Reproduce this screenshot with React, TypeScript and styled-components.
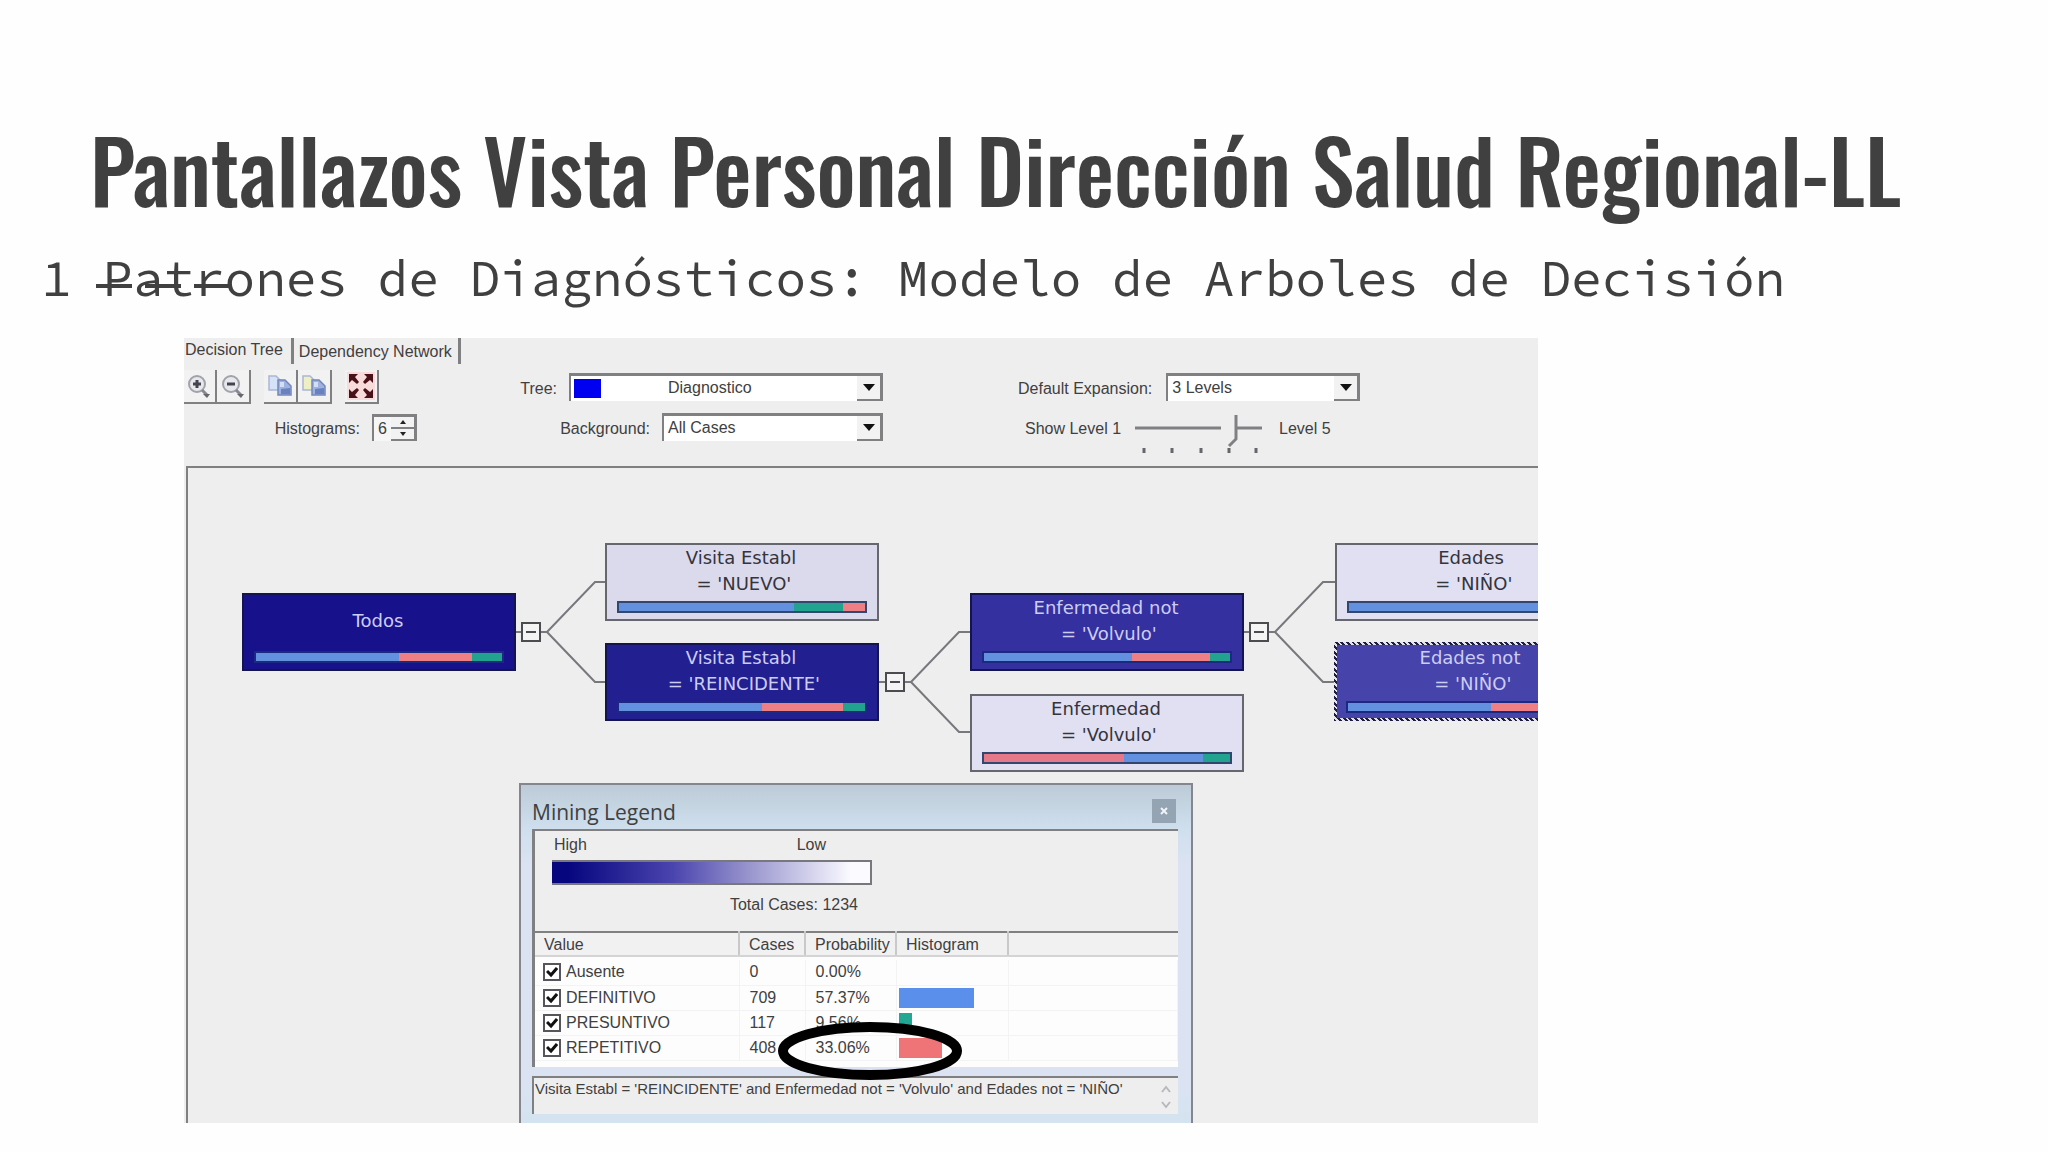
import React from "react";
import styled, { createGlobalStyle, css } from "styled-components";

const INK = "#404040";
const GREY = "#808083";
const FACE = "#efeeef";
const BLUE = "#6490e0";
const GREEN = "#22a390";
const RED = "#ee8085";

const GlobalStyle = createGlobalStyle`
  *, *::before, *::after { box-sizing: border-box; }
  body {
    margin: 0;
    background: #fefefe;
    color: ${INK};
    font-family: "Liberation Sans", Arial, sans-serif;
  }
  button, input, select, textarea { font: inherit; color: inherit; margin: 0; }
`;

const Slide = styled.main`
  display: flex;
  flex-direction: column;
  padding: 108px 0 28px;
`;

const Title = styled.h1`
  margin: 0;
  padding-left: 90px;
  font-family: Oswald, "Roboto Condensed", Roboto, sans-serif;
  font-size: 86px;
  font-weight: 500;
  line-height: 120px;
  white-space: nowrap;
`;

const Subtitle = styled.h2`
  position: relative;
  margin: 0;
  padding: 16px 0 26px 41px;
  font-family: "Source Code Pro", "Liberation Mono", monospace;
  font-size: 51px;
  font-weight: 400;
  line-height: 68px;
  white-space: nowrap;
`;

const Dashes = styled.span`
  position: absolute;
  left: 96px;
  top: 56px;
  display: flex;
  gap: 13px;
`;

const Dash = styled.span`
  width: 36px;
  height: 4px;
  background: ${INK};
`;

const Viewer = styled.section`
  margin: 0 510px 0 184px;
  overflow: hidden;
  background: ${FACE};
  font-size: 16px;
  line-height: 20px;
`;

const Tabs = styled.div`
  display: flex;
  height: 28px;
`;

const Tab = styled.button<{ $active?: boolean }>`
  height: 26px;
  padding: ${(p) => (p.$active ? "0 8px 2px 1px" : "2px 6px 0 5px")};
  border: 0;
  border-right: 3px solid ${GREY};
  background: none;
  text-align: left;
  white-space: nowrap;
`;

const Controls = styled.div`
  display: grid;
  grid-template-columns: 336px 363px 1fr;
  grid-template-rows: 40px 40px;
  padding: 4px 0 16px;
`;

const Tools = styled.div`
  display: flex;
  gap: 13px;
  margin-left: -1px;
`;

const ToolGroup = styled.div`
  display: flex;
`;

const ToolButton = styled.button`
  display: flex;
  align-items: center;
  justify-content: center;
  width: 34px;
  height: 34px;
  padding: 0;
  border: 0;
  border-right: 2px solid ${GREY};
  border-bottom: 2px solid ${GREY};
  background: #f3f2f2;
`;

const Field = styled.div<{ $indent?: number; $end?: number; $right?: boolean; $gap?: number }>`
  display: flex;
  align-items: center;
  justify-content: ${(p) => (p.$right ? "flex-end" : "flex-start")};
  gap: ${(p) => p.$gap ?? 12}px;
  height: 34px;
  padding-left: ${(p) => p.$indent ?? 0}px;
  padding-right: ${(p) => p.$end ?? 0}px;
  white-space: nowrap;
  > label, > span { padding-top: 4px; }
`;

const sunken = css`
  border-style: solid;
  border-color: ${GREY};
  border-width: 3px 3px 0 2px;
`;

const SelectBox = styled.div<{ $width: number }>`
  position: relative;
  width: ${(p) => p.$width}px;
  height: 28px;
  ${sunken}
  background: #fff;
`;

const Select = styled.select<{ $inset?: number }>`
  width: 100%;
  height: 24px;
  padding: 0 26px 0 ${(p) => p.$inset ?? 4}px;
  border: 0;
  appearance: none;
  background: transparent;
`;

const Swatch = styled.span`
  position: absolute;
  left: 3px;
  top: 3px;
  width: 27px;
  height: 19px;
  background: #0000f0;
`;

const Drop = styled.span`
  position: absolute;
  right: 0;
  top: 0;
  display: flex;
  align-items: center;
  justify-content: center;
  width: 23px;
  height: 25px;
  border-bottom: 2px solid ${GREY};
  background: #f3f2f2;
  pointer-events: none;
`;

const Spinner = styled.div`
  display: flex;
  width: 45px;
  height: 27px;
  ${sunken}
  background: #f6f6f6;
`;

const SpinInput = styled.input`
  width: 17px;
  padding: 0 0 0 4px;
  border: 0;
  background: transparent;
`;

const SpinButtons = styled.div`
  display: flex;
  flex-direction: column;
  flex: 1;
`;

const SpinButton = styled.button`
  display: flex;
  align-items: center;
  justify-content: center;
  height: 12px;
  padding: 0;
  border: 0;
  border-bottom: 2px solid ${GREY};
  background: #f3f2f2;
`;

const SliderBox = styled.div`
  position: relative;
  width: 130px;
  height: 40px;
  margin-top: 14px;
`;

const SliderInput = styled.input`
  position: absolute;
  inset: 0;
  width: 100%;
  height: 100%;
  opacity: 0;
`;

const Canvas = styled.div`
  position: relative;
  min-height: 657px;
  margin-left: 2px;
  border-top: 2px solid ${GREY};
  border-left: 2px solid ${GREY};
  overflow: hidden;
`;

const Links = styled.svg`
  position: absolute;
  left: 0;
  top: 0;
`;

const Node = styled.div<{ $x: number; $y: number; $fill: string; $dark?: boolean; $selected?: boolean }>`
  position: absolute;
  left: ${(p) => p.$x}px;
  top: ${(p) => p.$y}px;
  display: flex;
  flex-direction: column;
  width: 274px;
  height: 78px;
  padding: 0 10px 6px;
  border: 2px solid ${(p) => (p.$dark ? "#14144e" : "#66666e")};
  background: ${(p) => p.$fill};
  color: ${(p) => (p.$dark ? "#cdcdf2" : "#34343c")};
  font-family: "DejaVu Sans", Verdana, sans-serif;
  font-size: 18px;
  line-height: 26px;
  text-align: center;
  white-space: pre;
  ${(p) =>
    p.$selected &&
    css`
      height: 79px;
      border-color: transparent;
      background:
        linear-gradient(${p.$fill}, ${p.$fill}) padding-box,
        repeating-linear-gradient(45deg, #1c1c44 0 2px, #e4e4ea 2px 4px) border-box;
      border-width: 3px;
      padding: 0 9px 5px;
    `}
`;

const NodeText = styled.div`
  display: flex;
  flex: 1;
  align-items: center;
  justify-content: center;
  padding: 0 2px 4px 0;
`;

const Bar = styled.div<{ $dark?: boolean }>`
  display: flex;
  height: 12px;
  border: 2px solid ${(p) => (p.$dark ? "#1b2a80" : "#33466e")};
`;

const Segment = styled.span<{ $color: string }>`
  background: ${(p) => p.$color};
`;

const Legend = styled.section`
  position: absolute;
  left: 331px;
  top: 315px;
  width: 674px;
  height: 360px;
  padding: 0 13px 0 11px;
  border: 2px solid #85858f;
  background: linear-gradient(#bccbd6 0, #cfdfee 44px, #dbe3f2 80px, #dbe3f2 300px, #d3e3ef 340px);
`;

const LegendBar = styled.header`
  display: flex;
  align-items: center;
  justify-content: space-between;
  height: 44px;
  padding: 10px 2px 0 0;
`;

const LegendTitle = styled.h3`
  margin: 0;
  font-family: "Open Sans", "Noto Sans", sans-serif;
  font-size: 21px;
  font-weight: 400;
  line-height: 28px;
`;

const Close = styled.button`
  display: flex;
  align-items: center;
  justify-content: center;
  width: 24px;
  height: 24px;
  margin-bottom: 2px;
  padding: 0;
  border: 0;
  background: #94a4b2;
`;

const LegendBody = styled.div`
  border-top: 2px solid ${GREY};
  border-left: 3px solid ${GREY};
  background: ${FACE};
`;

const Scale = styled.div`
  width: 337px;
  height: 100px;
  padding: 4px 0 0 17px;
`;

const ScaleLabels = styled.div`
  display: flex;
  justify-content: space-between;
  padding: 0 46px 0 2px;
`;

const Ramp = styled.div`
  height: 25px;
  margin: 5px 0 10px;
  border: 2px solid #77777c;
  border-left: 0;
  background: linear-gradient(90deg, #06067e 5%, #4a44ae 38%, #8c88c8 58%, #fafaff 94%);
`;

const Total = styled.div`
  padding-right: 14px;
  text-align: right;
`;

const Grid = styled.table`
  width: 100%;
  table-layout: fixed;
  border-collapse: collapse;
  border-top: 2px solid ${GREY};
  background: #fdfdfd;
`;

const Head = styled.th`
  height: 22px;
  padding: 2px 0 0 9px;
  border-right: 2px solid #c9c9cb;
  border-bottom: 2px solid #d4d4d6;
  background: #f2f1f2;
  font-weight: 400;
  text-align: left;
  &:last-child { border-right: 0; }
`;

const Cell = styled.td`
  height: 25px;
  padding: 0 0 0 10px;
  border-right: 1px solid #f3f3f3;
  border-bottom: 1px solid #f3f3f3;
`;

const BarCell = styled(Cell)`
  padding: 0 0 0 2px;
`;

const Spacer = styled.td<{ $h: number }>`
  height: ${(p) => p.$h}px;
  padding: 0;
`;

const Check = styled.label`
  display: flex;
  align-items: center;
  gap: 5px;
  margin-left: -2px;
`;

const CheckInput = styled.input`
  width: 18px;
  height: 18px;
  border: 2px solid #55555a;
  appearance: none;
  background: #fff;
`;

const CheckMark = styled.span`
  position: relative;
  display: flex;
  svg { position: absolute; left: 3px; top: 3px; pointer-events: none; }
`;

const Histo = styled.div<{ $color: string }>`
  height: 20px;
  background: ${(p) => p.$color};
`;

const Rule = styled.div`
  display: flex;
  height: 38px;
  margin-top: 9px;
  border-top: 2px solid ${GREY};
  border-left: 2px solid ${GREY};
  background: ${FACE};
`;

const RuleText = styled.textarea`
  flex: 1;
  height: 34px;
  padding: 1px 0 0 1px;
  border: 0;
  outline: 0;
  resize: none;
  overflow: hidden;
  background: transparent;
  font-size: 15px;
  line-height: 20px;
  white-space: pre;
`;

const Arrows = styled.svg`
  flex: none;
  margin: 6px 6px 0 0;
`;

const Ring = styled.svg`
  position: absolute;
  left: 588px;
  top: 550px;
  pointer-events: none;
`;

const Triangle = () => (
  <svg width="12" height="7" viewBox="0 0 12 7" aria-hidden="true">
    <path d="M0 0H12L6 7Z" fill="#111" />
  </svg>
);

const Magnifier = ({ plus }: { plus?: boolean }) => (
  <svg width="24" height="26" viewBox="0 0 24 26" aria-hidden="true">
    <circle cx="10" cy="11" r="8" fill="#e6e8ee" stroke="#a2a2aa" strokeWidth="2" />
    <path d={plus ? "M6 11H14M10 7V15" : "M6 11H14"} stroke="#44444c" strokeWidth="3" />
    <path d="M15 17L20 22" stroke="#88888f" strokeWidth="3" />
    <path d="M16 21H23L20 25Z" fill="#66666c" />
  </svg>
);

const Copy = ({ back }: { back: string }) => (
  <svg width="26" height="24" viewBox="0 0 26 24" aria-hidden="true">
    <path d="M2 2H9L13 6V16H2Z" fill={back} stroke="#aab6d4" strokeWidth="1.5" />
    <path d="M11 6H18L24 12V21H11Z" fill="#9db2de" stroke="#7486bc" strokeWidth="1.5" />
    <path d="M14 15L23 14V20H14Z" fill="#6a81c0" />
    <path d="M13 8H17V13H13Z" fill="#d3def4" />
  </svg>
);

const Fit = () => (
  <svg width="28" height="28" viewBox="0 0 28 28" aria-hidden="true">
    <rect width="28" height="28" fill="#f8dcdc" />
    <g fill="#4a1118">
      <path d="M2 2H11L8 5L12 10L10 12L5 8L2 11Z" />
      <path d="M26 2H17L20 5L16 10L18 12L23 8L26 11Z" />
      <path d="M2 26H11L8 23L12 18L10 16L5 20L2 17Z" />
      <path d="M26 26H17L20 23L16 18L18 16L23 20L26 17Z" />
    </g>
  </svg>
);

type NodeData = {
  text: string;
  x: number;
  y: number;
  fill: string;
  dark?: boolean;
  selected?: boolean;
  bar: [string, number][];
};

const nodes: NodeData[] = [
  { text: "Todos", x: 54, y: 125, fill: "#17128b", dark: true, bar: [[BLUE, 58], [RED, 30], [GREEN, 12]] },
  { text: "Visita Establ\n = 'NUEVO'", x: 417, y: 75, fill: "#dbdaec", bar: [[BLUE, 71], [GREEN, 20], [RED, 9]] },
  { text: "Visita Establ\n = 'REINCIDENTE'", x: 417, y: 175, fill: "#221f91", dark: true, bar: [[BLUE, 58], [RED, 33], [GREEN, 9]] },
  { text: "Enfermedad not\n = 'Volvulo'", x: 782, y: 125, fill: "#3430a0", dark: true, bar: [[BLUE, 60], [RED, 32], [GREEN, 8]] },
  { text: "Enfermedad\n = 'Volvulo'", x: 782, y: 226, fill: "#e0e0f2", bar: [["#e5798a", 57], [BLUE, 32], [GREEN, 11]] },
  { text: "Edades\n = 'NIÑO'", x: 1147, y: 75, fill: "#e0e0f2", bar: [[BLUE, 100]] },
  { text: "Edades not\n = 'NIÑO'", x: 1146, y: 174, fill: "#4643ab", dark: true, selected: true, bar: [[BLUE, 58], [RED, 42]] },
];

const forks = [
  { x: 327, y: 164 },
  { x: 691, y: 214 },
  { x: 1055, y: 164 },
];

const values = [
  { name: "Ausente", cases: 0, p: "0.00", color: BLUE },
  { name: "DEFINITIVO", cases: 709, p: "57.37", color: "#5a8fec" },
  { name: "PRESUNTIVO", cases: 117, p: "9.56", color: "#20a894" },
  { name: "REPETITIVO", cases: 408, p: "33.06", color: "#ef7478" },
];

export default function App() {
  return (
    <>
      <GlobalStyle />
      <Slide>
        <Title>Pantallazos Vista Personal Dirección Salud Regional-LL</Title>
        <Subtitle>
          1 Patrones de Diagnósticos: Modelo de Arboles de Decisión
          <Dashes aria-hidden="true">
            <Dash />
            <Dash />
            <Dash />
          </Dashes>
        </Subtitle>
        <Viewer>
          <Tabs role="tablist">
            <Tab role="tab" aria-selected="true" $active>Decision Tree</Tab>
            <Tab role="tab" aria-selected="false">Dependency Network</Tab>
          </Tabs>
          <Controls>
            <Tools>
              <ToolGroup>
                <ToolButton aria-label="Zoom in"><Magnifier plus /></ToolButton>
                <ToolButton aria-label="Zoom out"><Magnifier /></ToolButton>
              </ToolGroup>
              <ToolGroup>
                <ToolButton aria-label="Copy graph view"><Copy back="#d5e2f8" /></ToolButton>
                <ToolButton aria-label="Copy entire graph"><Copy back="#eef0c4" /></ToolButton>
              </ToolGroup>
              <ToolButton aria-label="Zoom to fit"><Fit /></ToolButton>
            </Tools>
            <Field $right>
              <label htmlFor="tree">Tree:</label>
              <SelectBox $width={314}>
                <Swatch />
                <Select id="tree" $inset={97}><option>Diagnostico</option></Select>
                <Drop><Triangle /></Drop>
              </SelectBox>
            </Field>
            <Field $indent={135} $gap={14}>
              <label htmlFor="expansion">Default Expansion:</label>
              <SelectBox $width={194}>
                <Select id="expansion"><option>3 Levels</option></Select>
                <Drop><Triangle /></Drop>
              </SelectBox>
            </Field>
            <Field $right $end={103}>
              <label htmlFor="histograms">Histograms:</label>
              <Spinner>
                <SpinInput id="histograms" defaultValue="6" />
                <SpinButtons>
                  <SpinButton aria-label="More">
                    <svg width="6" height="4" aria-hidden="true"><path d="M0 4H6L3 0Z" fill="#222" /></svg>
                  </SpinButton>
                  <SpinButton aria-label="Fewer">
                    <svg width="6" height="4" aria-hidden="true"><path d="M0 0H6L3 4Z" fill="#222" /></svg>
                  </SpinButton>
                </SpinButtons>
              </Spinner>
            </Field>
            <Field $right>
              <label htmlFor="background">Background:</label>
              <SelectBox $width={221}>
                <Select id="background"><option>All Cases</option></Select>
                <Drop><Triangle /></Drop>
              </SelectBox>
            </Field>
            <Field $indent={142} $gap={14}>
              <label htmlFor="level">Show Level 1</label>
              <SliderBox>
                <svg width="130" height="40" viewBox="0 0 130 40" fill="none" stroke={GREY} aria-hidden="true">
                  <path d="M0 14H86M101 14H127" strokeWidth="3" />
                  <path d="M101 1V25L94 32" strokeWidth="3" />
                  <path d="M9 34V39M37 34V39M66 34V39M94 34V39M121 34V39" strokeWidth="3" stroke="#66666a" />
                </svg>
                <SliderInput id="level" type="range" min="1" max="5" defaultValue="4" />
              </SliderBox>
              <span>Level 5</span>
            </Field>
          </Controls>
          <Canvas>
            <Links width="1350" height="300" fill="none" stroke="#77777c" strokeWidth="2" aria-hidden="true">
              {forks.map((f) => (
                <g key={f.x}>
                  <path d={`M${f.x} ${f.y}H${f.x + 32}L${f.x + 80} ${f.y - 50}H${f.x + 92}M${f.x + 32} ${f.y}L${f.x + 80} ${f.y + 50}H${f.x + 92}`} />
                  <rect x={f.x + 7} y={f.y - 9} width="18" height="18" fill="#f4f4f4" stroke="#4c4c50" />
                  <path d={`M${f.x + 11} ${f.y}H${f.x + 21}`} stroke="#4c4c50" />
                </g>
              ))}
            </Links>
            {nodes.map((n) => (
              <Node key={n.text + n.x} $x={n.x} $y={n.y} $fill={n.fill} $dark={n.dark} $selected={n.selected}>
                <NodeText>{n.text}</NodeText>
                <Bar $dark={n.dark}>
                  {n.bar.map(([color, share]) => (
                    <Segment key={color} $color={color} style={{ width: `${share}%` }} />
                  ))}
                </Bar>
              </Node>
            ))}
            <Legend>
              <LegendBar>
                <LegendTitle>Mining Legend</LegendTitle>
                <Close aria-label="Close">
                  <svg width="8" height="8" viewBox="0 0 8 8" aria-hidden="true">
                    <path d="M1 1L7 7M7 1L1 7" stroke="#f0f4f8" strokeWidth="2" />
                  </svg>
                </Close>
              </LegendBar>
              <LegendBody>
                <Scale>
                  <ScaleLabels><span>High</span><span>Low</span></ScaleLabels>
                  <Ramp />
                  <Total>Total Cases: 1234</Total>
                </Scale>
                <Grid>
                  <colgroup>
                    <col style={{ width: 204 }} />
                    <col style={{ width: 66 }} />
                    <col style={{ width: 91 }} />
                    <col style={{ width: 112 }} />
                    <col />
                  </colgroup>
                  <thead>
                    <tr>
                      <Head>Value</Head>
                      <Head>Cases</Head>
                      <Head>Probability</Head>
                      <Head>Histogram</Head>
                      <Head aria-label="Notes" />
                    </tr>
                  </thead>
                  <tbody>
                    <tr><Spacer $h={4} colSpan={5} /></tr>
                    {values.map((v) => (
                      <tr key={v.name}>
                        <Cell>
                          <Check>
                            <CheckMark>
                              <CheckInput type="checkbox" defaultChecked />
                              <svg width="12" height="12" viewBox="0 0 12 12" aria-hidden="true">
                                <path d="M1 5L5 9L11 2" fill="none" stroke="#111" strokeWidth="3" />
                              </svg>
                            </CheckMark>
                            {v.name}
                          </Check>
                        </Cell>
                        <Cell>{v.cases}</Cell>
                        <Cell>{v.p}%</Cell>
                        <BarCell><Histo $color={v.color} style={{ width: Math.round(Number(v.p) * 1.31) }} /></BarCell>
                        <Cell />
                      </tr>
                    ))}
                    <tr><Spacer $h={7} colSpan={5} /></tr>
                  </tbody>
                </Grid>
              </LegendBody>
              <Rule>
                <RuleText
                  readOnly
                  aria-label="Node condition"
                  defaultValue="Visita Establ = 'REINCIDENTE' and Enfermedad not = 'Volvulo' and Edades not = 'NIÑO'"
                />
                <Arrows width="12" height="26" viewBox="0 0 12 26" fill="none" stroke="#b8b8bc" strokeWidth="2" aria-hidden="true">
                  <path d="M2 8L6 3L10 8M2 18L6 23L10 18" />
                </Arrows>
              </Rule>
            </Legend>
            <Ring width="190" height="66" viewBox="0 0 190 66" aria-hidden="true">
              <ellipse cx="94" cy="33" rx="87" ry="24" fill="none" stroke="#000" strokeWidth="10" />
            </Ring>
          </Canvas>
        </Viewer>
      </Slide>
    </>
  );
}
